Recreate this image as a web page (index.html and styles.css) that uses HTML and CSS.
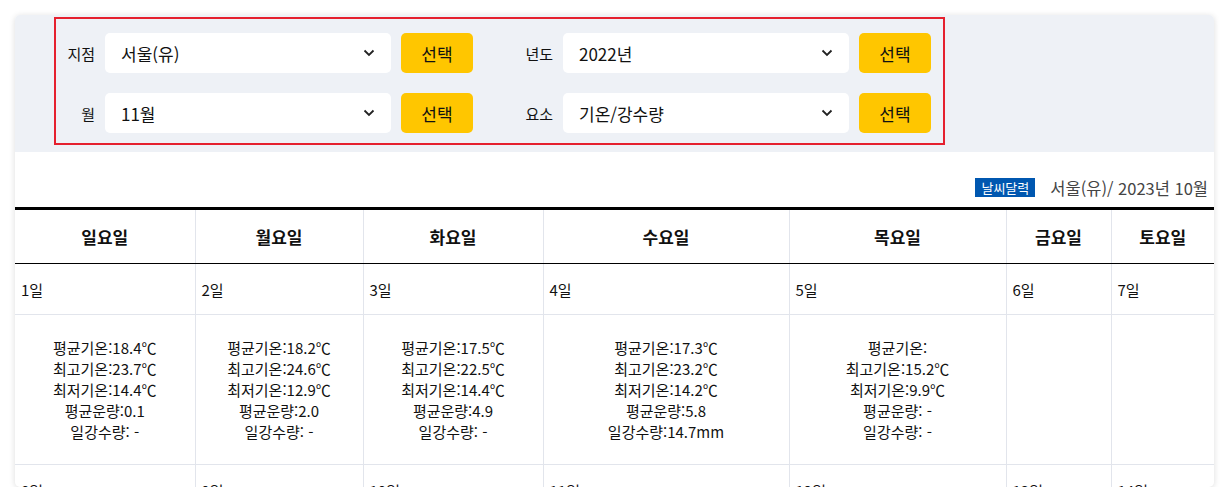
FILE: index.html
```html
<!DOCTYPE html>
<html lang="ko">

<head>
  <meta charset="UTF-8">
  <title>날씨달력</title>
  <link rel="stylesheet" href="styles.css">
</head>

<body>
  <div class="card">
    <div class="search">
      <form class="search-box">
        <label class="search-label" for="station">지점</label>
        <div class="select-wrap">
          <select id="station">
            <option>서울(유)</option>
          </select>
          <svg class="chevron" width="12" height="8" viewBox="0 0 12 8"><path d="M1.5 1.5 L6 6 L10.5 1.5" fill="none" stroke="#222" stroke-width="1.8"/></svg>
        </div>
        <button type="button" class="btn">선택</button>

        <label class="search-label" for="year">년도</label>
        <div class="select-wrap">
          <select id="year">
            <option>2022년</option>
          </select>
          <svg class="chevron" width="12" height="8" viewBox="0 0 12 8"><path d="M1.5 1.5 L6 6 L10.5 1.5" fill="none" stroke="#222" stroke-width="1.8"/></svg>
        </div>
        <button type="button" class="btn">선택</button>

        <label class="search-label" for="month">월</label>
        <div class="select-wrap">
          <select id="month">
            <option>11월</option>
          </select>
          <svg class="chevron" width="12" height="8" viewBox="0 0 12 8"><path d="M1.5 1.5 L6 6 L10.5 1.5" fill="none" stroke="#222" stroke-width="1.8"/></svg>
        </div>
        <button type="button" class="btn">선택</button>

        <label class="search-label" for="element">요소</label>
        <div class="select-wrap">
          <select id="element">
            <option>기온/강수량</option>
          </select>
          <svg class="chevron" width="12" height="8" viewBox="0 0 12 8"><path d="M1.5 1.5 L6 6 L10.5 1.5" fill="none" stroke="#222" stroke-width="1.8"/></svg>
        </div>
        <button type="button" class="btn">선택</button>
      </form>
    </div>

    <div class="cal-title">
      <span class="badge">날씨달력</span>
      <span class="cal-name">서울(유)/ 2023년 10월</span>
    </div>

    <table class="calendar">
      <colgroup>
        <col style="width:180px">
        <col style="width:168px">
        <col style="width:180px">
        <col style="width:246px">
        <col style="width:217px">
        <col style="width:105px">
        <col style="width:103px">
      </colgroup>
      <thead>
        <tr>
          <th>일요일</th>
          <th>월요일</th>
          <th>화요일</th>
          <th>수요일</th>
          <th>목요일</th>
          <th>금요일</th>
          <th>토요일</th>
        </tr>
      </thead>
      <tbody>
        <tr class="day-row">
          <td>1일</td>
          <td>2일</td>
          <td>3일</td>
          <td>4일</td>
          <td>5일</td>
          <td>6일</td>
          <td>7일</td>
        </tr>
        <tr class="data-row">
          <td>평균기온:18.4℃<br>최고기온:23.7℃<br>최저기온:14.4℃<br>평균운량:0.1<br>일강수량: -</td>
          <td>평균기온:18.2℃<br>최고기온:24.6℃<br>최저기온:12.9℃<br>평균운량:2.0<br>일강수량: -</td>
          <td>평균기온:17.5℃<br>최고기온:22.5℃<br>최저기온:14.4℃<br>평균운량:4.9<br>일강수량: -</td>
          <td>평균기온:17.3℃<br>최고기온:23.2℃<br>최저기온:14.2℃<br>평균운량:5.8<br>일강수량:14.7mm</td>
          <td>평균기온:<br>최고기온:15.2℃<br>최저기온:9.9℃<br>평균운량: -<br>일강수량: -</td>
          <td></td>
          <td></td>
        </tr>
        <tr class="day-row">
          <td>8일</td>
          <td>9일</td>
          <td>10일</td>
          <td>11일</td>
          <td>12일</td>
          <td>13일</td>
          <td>14일</td>
        </tr>
      </tbody>
    </table>
  </div>
</body>

</html>
```

FILE: styles.css
```css
body {
  margin: 0;
  background: #ffffff;
  font-family: "Noto Sans CJK KR", "Noto Sans", sans-serif;
  color: #111;
}

.card {
  margin: 15px 16px 0 15px;
  height: 472px;
  overflow: hidden;
  background: #ffffff;
  border-radius: 5px;
  box-shadow: 0 1px 6px rgba(0, 0, 0, 0.14);
}

.search {
  background: #eef1f6;
  padding: 2px 0 7px 39px;
}

.search-box {
  display: grid;
  grid-template-columns: 39px 286px 72px 70px 286px 72px;
  grid-auto-rows: 40px;
  column-gap: 10px;
  row-gap: 20px;
  align-items: center;
  box-sizing: border-box;
  width: 891px;
  padding: 14px 12px 10px 0;
  border: 2px solid #e5202e;
}

.search-label {
  text-align: right;
  font-size: 15px;
  color: #111;
}

.select-wrap {
  position: relative;
  height: 40px;
}

.select-wrap select {
  appearance: none;
  -webkit-appearance: none;
  width: 100%;
  height: 40px;
  padding: 0 40px 0 16px;
  border: none;
  border-radius: 5px;
  background: #ffffff;
  font-family: inherit;
  font-size: 17px;
  color: #111;
}

.chevron {
  position: absolute;
  right: 16px;
  top: 16px;
  pointer-events: none;
}

.btn {
  height: 40px;
  border: none;
  border-radius: 5px;
  background: #ffc600;
  font-family: inherit;
  font-size: 17px;
  color: #111;
  cursor: pointer;
}

.cal-title {
  display: flex;
  justify-content: flex-end;
  align-items: center;
  gap: 15px;
  height: 55px;
  padding: 16px 6px 0 0;
  box-sizing: border-box;
}

.badge {
  background: #0057b0;
  color: #ffffff;
  font-size: 13px;
  line-height: 19px;
  padding: 0 6px;
}

.cal-name {
  font-size: 16.5px;
  color: #444;
}

.calendar {
  width: 100%;
  table-layout: fixed;
  border-collapse: collapse;
  border-top: 3px solid #000;
}

.calendar th,
.calendar td {
  border-left: 1px solid #e2e5ec;
  padding: 0;
}

.calendar th:first-child,
.calendar td:first-child {
  border-left: none;
}

.calendar th {
  height: 53px;
  font-size: 17px;
  font-weight: bold;
  border-bottom: 1px solid #000;
}

.day-row td {
  height: 50px;
  padding-left: 6px;
  font-size: 15px;
  border-bottom: 1px solid #e2e5ec;
}

.data-row td {
  height: 149px;
  text-align: center;
  vertical-align: middle;
  font-size: 15px;
  line-height: 21px;
  border-bottom: 1px solid #e2e5ec;
}
```
